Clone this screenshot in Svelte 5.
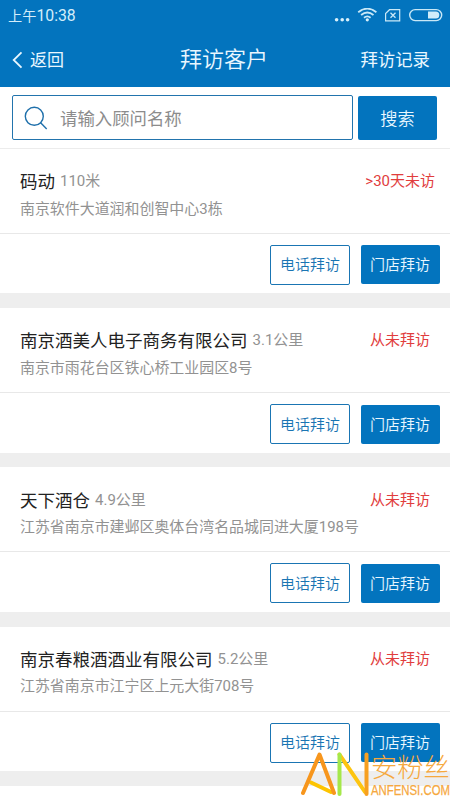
<script>
  const customers = [
    { name: '码动', distance: '110米', address: '南京软件大道润和创智中心3栋', status: '>30天未访', overdue: true },
    { name: '南京酒美人电子商务有限公司', distance: '3.1公里', address: '南京市雨花台区铁心桥工业园区8号', status: '从未拜访' },
    { name: '天下酒仓', distance: '4.9公里', address: '江苏省南京市建邺区奥体台湾名品城同进大厦198号', status: '从未拜访' },
    { name: '南京春粮酒酒业有限公司', distance: '5.2公里', address: '江苏省南京市江宁区上元大街708号', status: '从未拜访' },
  ];
</script>

<div class="screen">
  <header>
    <div class="statusbar">
      <span class="time">上午<span>10:38</span></span>
      <svg class="signals" width="110" height="20" viewBox="0 0 110 20" fill="none" stroke="#c9e8f7">
        <g fill="#d8f0fb" stroke="none">
          <circle cx="3.6" cy="11.8" r="1.8" /><circle cx="9.2" cy="11.8" r="1.8" /><circle cx="14.6" cy="11.8" r="1.8" />
          <circle cx="34.3" cy="11.8" r="1.6" />
        </g>
        <g stroke-width="1.8">
          <path d="M25.2 4.3Q34.3-3 43.4 4.3" />
          <path d="M28.1 7Q34.3 2 40.5 7" />
          <path d="M31 9.7Q34.3 7 37.6 9.7" />
        </g>
        <path d="M56.5 1.7h10.2v11.2H52.6V5.5z" stroke-width="1.2" />
        <path d="M57.5 4.8l5 5m0-5l-5 5" stroke-width="1.3" />
        <rect x="76.7" y="1.6" width="32" height="11" rx="5.5" stroke-width="1.4" />
        <path d="M95 3.6h7.8a3.5 3.5 0 010 7H95z" fill="#d0ecfa" stroke="none" />
      </svg>
    </div>
    <nav>
      <div class="back">
        <svg width="11" height="18" viewBox="0 0 11 18" fill="none" stroke="#e9f7ff" stroke-width="1.8"><path d="M9.5 1.3L1.7 9l7.8 7.7" /></svg>
        <span>返回</span>
      </div>
      <h1>拜访客户</h1>
      <span class="records">拜访记录</span>
    </nav>
  </header>

  <div class="search">
    <div class="field">
      <svg width="24" height="24" viewBox="0 0 24 24" fill="none" stroke="#1f70ab" stroke-width="1.4"><circle cx="10.3" cy="10.3" r="9" /><path d="M16.4 16.6l6.3 6.3" /></svg>
      <span>请输入顾问名称</span>
    </div>
    <button class="go">搜索</button>
  </div>

  <main>
    {#each customers as c}
      <article>
        <div class="info">
          <div class="row">
            <span class="name">{c.name}</span>
            <span class="distance">{c.distance}</span>
            <span class="status" class:overdue={c.overdue}>{c.status}</span>
          </div>
          <div class="address">{c.address}</div>
        </div>
        <div class="actions">
          <button class="phone">电话拜访</button>
          <button class="store">门店拜访</button>
        </div>
      </article>
    {/each}
    <div class="next"></div>
  </main>

  <div class="watermark">
    <svg width="72" height="48" viewBox="0 0 72 48" fill="none" stroke-width="4" stroke-linecap="round">
      <path d="M12 33.5L32 43" stroke="#fdc400" />
      <path d="M4 44L20.5 5.5L35 44" stroke="#f7961d" stroke-linejoin="round" />
      <path d="M40.5 5.5L66 43" stroke="#fdc510" />
      <path d="M40.5 5.5V45" stroke="#a5e84a" />
      <path d="M67.5 5.5V45" stroke="#f7a021" />
    </svg>
    <div class="brand">
      <span class="cn">安粉丝</span>
      <span class="en">ANFENSI.COM</span>
    </div>
  </div>
</div>

<style>
  :global(body) { margin: 0; background: #fff; }
  .screen {
    position: relative;
    width: 450px;
    height: 800px;
    overflow: hidden;
    background: #fff;
    font-family: Roboto, "Noto Sans CJK SC", sans-serif;
    font-weight: 400;
  }
  .screen * { box-sizing: border-box; }
  header { height: 87px; background: #0374be; color: #e9f7ff; }
  .statusbar { display: flex; justify-content: space-between; height: 32px; padding: 0 7px 0 8px; }
  .time { font-size: 14.2px; line-height: 32px; color: #d3edfa; }
  .time span { font-size: 15.8px; }
  .signals { margin-top: 8px; }
  nav { display: flex; align-items: center; height: 55px; padding: 0 20px 0 12px; line-height: 26px; }
  .back { display: flex; align-items: center; gap: 7px; width: 168px; font-size: 17px; }
  h1 { flex: 1; margin: 0; font-size: 22px; font-weight: 350; }
  .records { font-size: 17.4px; }
  .search { display: flex; gap: 5px; height: 61.8px; padding: 8px 13px 0 12px; border-bottom: 1px solid #ececec; }
  .field {
    display: flex; align-items: center; gap: 12px; width: 341px; height: 45px; padding-left: 11px;
    border: 1px solid #2274ad; border-radius: 2px; color: #8c8c8c; font-size: 17.4px;
  }
  button { margin: 0; padding: 0 0 2px; border: 0; border-radius: 2px; font-family: inherit; font-weight: 350; }
  .go { width: 79px; height: 44px; margin-top: 1px; background: #0374be; color: #e9f7ff; font-size: 17.2px; }
  main { background: #eee; }
  article { height: 144.7px; margin-bottom: 14.6px; background: #fff; }
  .info { height: 85px; padding: 21.2px 20px 0; border-bottom: 1px solid #e8e8e8; }
  .row { display: flex; height: 26px; white-space: nowrap; }
  .name { color: #222; font-size: 17.5px; line-height: 25px; }
  .distance { margin-left: 5px; color: #929292; font-size: 15px; line-height: 22px; }
  .status { margin-left: auto; color: #e13d3d; font-size: 15px; line-height: 22px; }
  .status.overdue { margin-right: -5px; }
  .address { color: #929292; font-size: 14.95px; line-height: 22px; margin-top: 1.6px; white-space: nowrap; }
  .actions { display: flex; justify-content: flex-end; gap: 10.5px; padding: 11px 10.5px 0 0; }
  .actions button { height: 40px; font-size: 15px; }
  .phone { width: 80px; border: 1px solid #1a75b3; background: #fff; color: #1a75b3; }
  .actions .store { width: 79px; height: 39px; margin-top: .5px; background: #0374be; color: #e9f7ff; }
  .next { height: 20px; background: #fff; }
  .watermark { position: absolute; left: 299px; top: 749px; display: flex; }
  .brand { display: flex; flex-direction: column; white-space: nowrap; color: #f6a83e; }
  .cn { font-size: 26.3px; line-height: 34px; font-weight: 300; font-family: "Noto Sans CJK SC", sans-serif; }
  .en { font-family: "Liberation Sans", sans-serif; font-size: 14.4px; line-height: 16px; height: 16px; margin-top: -3px; transform: scaleX(.79); transform-origin: left; width: 79px; padding-top: 2px; -webkit-text-stroke: .25px #f6a83e; }
</style>
